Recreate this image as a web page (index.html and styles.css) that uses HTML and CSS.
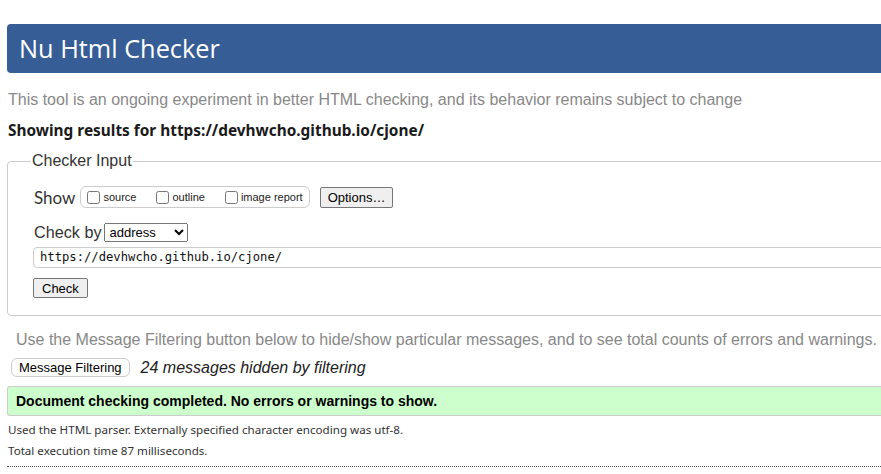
FILE: index.html
```html
<!DOCTYPE html>
<html>
<head>
<meta charset="utf-8">
<link rel="stylesheet" href="styles.css">
</head>
<body>
<div class="page">
  <h1 class="header">Nu Html Checker</h1>
  <p class="intro">This tool is an ongoing experiment in better HTML checking, and its behavior remains subject to change</p>
  <p class="showing">Showing results for https://devhwcho.github.io/cjone/</p>
  <fieldset class="input-box">
    <legend class="legend">Checker Input</legend>
    <div class="show-row">
      <span class="show-label">Show</span>
      <span class="show-options">
        <label class="opt"><input type="checkbox" class="cb">source</label>
        <label class="opt"><input type="checkbox" class="cb">outline</label>
        <label class="opt"><input type="checkbox" class="cb">image report</label>
      </span>
      <button class="btn options-btn">Options…</button>
    </div>
    <div class="by-row">
      <span class="by-label">Check by</span>
      <select class="sel"><option>address</option></select>
    </div>
    <div class="url">https://devhwcho.github.io/cjone/</div>
    <button class="btn check-btn">Check</button>
  </fieldset>
  <p class="filter-note">Use the Message Filtering button below to hide/show particular messages, and to see total counts of errors and warnings.</p>
  <div class="filter-row">
    <button class="filter-btn">Message Filtering</button>
    <span class="hidden-count">24 messages hidden by filtering</span>
  </div>
  <div class="success">Document checking completed. No errors or warnings to show.</div>
  <p class="meta">Used the HTML parser. Externally specified character encoding was utf-8.</p>
  <p class="meta">Total execution time 87 milliseconds.</p>
  <div class="dotted"></div>
</div>
</body>
</html>
```
FILE: styles.css
```css
html { overflow: hidden; }
body { margin: 0; background: #fff; font-family: "Liberation Sans", Arial, sans-serif; color: #222; }
.page { width: 900px; padding: 24px 0 0 7px; }
.header {
  margin: 0; height: 49px; box-sizing: border-box;
  background: #365d95; color: #fff; border-radius: 4px 0 0 4px;
  font-family: "Open Sans", "Noto Sans", sans-serif; font-weight: 400;
  font-size: 25.3px; line-height: 49px; padding-left: 12px;
}
.intro { margin: 17px 0 0 1px; color: #888; font-size: 16px; line-height: 20px; }
.showing { margin: 10px 0 0 1px; font-family: "Noto Sans", sans-serif; font-weight: 700; font-size: 15.4px; line-height: 22px; color: #1a1a1a; }
.input-box {
  margin: 10px 0 0 0; border: 1px solid #ccc; border-radius: 4px;
  padding: 4px 0 0 25px; height: 164px; box-sizing: border-box;
}
.legend { padding: 0 1px; margin-left: -2px; font-size: 16px; color: #333; }
.show-row { display: flex; align-items: center; margin-top: 12px; height: 22px; }
.show-label { font-family: "Lato", sans-serif; font-size: 17px; color: #333; margin-right: 5px; padding-left: 1px; }
.show-options { display: flex; align-items: center; border: 1px solid #ccc; border-radius: 6px; height: 20px; padding: 0 6px 0 2px; }
.opt { display: flex; align-items: center; font-size: 11px; color: #222; margin-right: 16px; }
.opt:last-child { margin-right: 0; }
.cb { margin: 0 3px 0 4px; width: 13px; height: 13px; }
.btn { font-family: "Liberation Sans", Arial, sans-serif; font-size: 13px; background: #efefef; border: 1px solid #767676; border-radius: 2px; padding: 1px 6px; color: #000; height: 21px; }
.options-btn { margin-left: 10px; padding: 1px 7px; }
.by-row { display: flex; align-items: center; margin-top: 15px; }
.by-label { font-size: 16.2px; color: #333; margin-right: 3px; padding-left: 1px; }
.sel { font-family: "Liberation Sans", Arial, sans-serif; font-size: 13px; width: 84px; height: 19px; }
.url {
  margin-top: 5px; height: 21px; box-sizing: border-box; border: 1px solid #ccc; border-radius: 4px;
  font-family: "DejaVu Sans Mono", monospace; font-size: 12.2px; line-height: 19px; padding-left: 6px; color: #111;
}
.check-btn { margin-top: 10px; padding: 1px 8px; height: 20px; }
.filter-note { margin: 14px 0 0 9px; color: #888; font-size: 16px; line-height: 20px; }
.filter-row { display: flex; align-items: center; margin-top: 8px; margin-left: 4px; }
.filter-btn { font-family: "Liberation Sans", Arial, sans-serif; font-size: 13px; background: #fff; border: 1px solid #ccc; border-radius: 6px; height: 19px; padding: 0 7px; color: #000; }
.hidden-count { font-style: italic; font-size: 16px; margin-left: 11px; color: #222; }
.success {
  margin-top: 9px; height: 30px; box-sizing: border-box; background: #ccffcc; border: 1px solid #ccc; border-right: 0;
  border-radius: 3px 0 0 3px; font-weight: 700; font-size: 14px; line-height: 28px; padding-left: 8px; color: #000;
}
.meta { margin: 6px 0 0 1px; font-family: "Noto Sans", sans-serif; font-size: 11.6px; line-height: 15px; color: #333; }
.meta + .meta { margin-top: 6px; }
.dotted { margin-top: 8px; border-top: 1px dotted #555; }
```
